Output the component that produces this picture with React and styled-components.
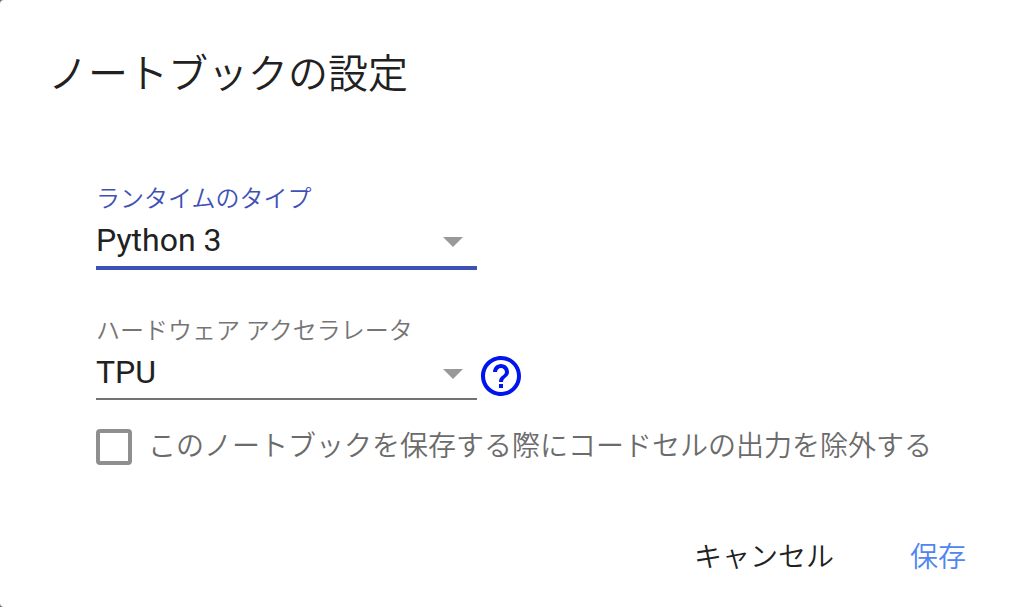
import React, {useState} from 'react';
import styled, {createGlobalStyle} from 'styled-components';

const GlobalStyle = createGlobalStyle`
*{
box-sizing:border-box;
}
body{
margin:0;
background:#6b6b6b;
font-family:Roboto, "Noto Sans CJK JP", sans-serif;
font-weight:350;
}
`;

function SelectField({id, label, value, options, onChange, active}) {
    return (
        <Field>
            <FieldLabel htmlFor={id} $active={active}>{label}</FieldLabel>
            <SelectWrapper $active={active}>
                <Select id={id} value={value} onChange={e => onChange(e.target.value)}>
                    {options.map(option => (
                        <option key={option} value={option}>{option}</option>
                    ))}
                </Select>
                <Arrow viewBox='0 0 20 10' aria-hidden='true'>
                    <path d='M0 0h20L10 10z'/>
                </Arrow>
            </SelectWrapper>
        </Field>
    );
}

export default function App() {
    const [runtime, setRuntime] = useState('Python 3');
    const [accelerator, setAccelerator] = useState('TPU');
    const [omitOutput, setOmitOutput] = useState(false);

    return (
        <>
            <GlobalStyle/>
            <Dialog role='dialog' aria-labelledby='dialog-title'>
                <Title id='dialog-title'>ノートブックの設定</Title>
                <Content>
                    <SelectField
                        id='runtime'
                        label='ランタイムのタイプ'
                        value={runtime}
                        options={['Python 2', 'Python 3']}
                        onChange={setRuntime}
                        active
                    />
                    <FieldRow>
                        <SelectField
                            id='accelerator'
                            label='ハードウェア アクセラレータ'
                            value={accelerator}
                            options={['None', 'GPU', 'TPU']}
                            onChange={setAccelerator}
                        />
                        <HelpLink href='#help' aria-label='ヘルプ'>
                            <svg viewBox='0 0 24 24' width='48' height='48' fill='currentColor'>
                                <path d='M11 18h2v-2h-2v2zm1-16C6.48 2 2 6.48 2 12s4.48 10 10 10 10-4.48 10-10S17.52 2 12 2zm0 18c-4.41 0-8-3.59-8-8s3.59-8 8-8 8 3.59 8 8-3.59 8-8 8zm0-14c-2.21 0-4 1.79-4 4h2c0-1.1.9-2 2-2s2 .9 2 2c0 2-3 1.75-3 5h2c0-2.25 3-2.5 3-5 0-2.21-1.79-4-4-4z'/>
                            </svg>
                        </HelpLink>
                    </FieldRow>
                    <CheckboxLabel>
                        <Checkbox
                            type='checkbox'
                            checked={omitOutput}
                            onChange={e => setOmitOutput(e.target.checked)}
                        />
                        このノートブックを保存する際にコードセルの出力を除外する
                    </CheckboxLabel>
                </Content>
                <Actions>
                    <ActionButton type='button'>キャンセル</ActionButton>
                    <ActionButton type='button' $primary>保存</ActionButton>
                </Actions>
            </Dialog>
        </>
    );
}

const Dialog = styled.div`
display:flex;
flex-direction:column;
min-height:100vh;
padding:48px 24px 22px 48px;
background:#fff;
border-radius:4px 0 0 4px;
color:#212121;
`;

const Title = styled.h2`
margin:0;
font-size:40px;
font-weight:inherit;
line-height:54px;
`;

const Content = styled.div`
display:flex;
flex-direction:column;
padding:82px 0 0 48px;
`;

const Field = styled.div`
width:381px;
max-width:100%;
`;

const FieldRow = styled.div`
display:flex;
align-items:flex-end;
margin-top:46px;
`;

const FieldLabel = styled.label`
display:block;
font-size:24px;
line-height:30px;
color:${props => props.$active ? '#3f51b5' : '#757575'};
`;

const SelectWrapper = styled.div`
display:flex;
align-items:center;
padding-right:14px;
border-bottom:${props => props.$active ? '4px solid #3f51b5' : '2px solid #737373'};
`;

const Select = styled.select`
appearance:none;
flex:1;
min-width:0;
height:52px;
margin:0;
padding:0;
border:none;
outline:none;
background:transparent;
color:#212121;
font-family:inherit;
font-size:32px;
font-weight:400;
cursor:pointer;
`;

const Arrow = styled.svg`
width:20px;
height:10px;
margin-top:4px;
fill:#999;
pointer-events:none;
`;

const HelpLink = styled.a`
display:flex;
color:#0015ee;
`;

const CheckboxLabel = styled.label`
display:flex;
align-items:center;
gap:16px;
margin-top:27px;
font-size:28px;
line-height:40px;
color:#6b6b6b;
`;

const Checkbox = styled.input`
appearance:none;
flex:none;
width:36px;
height:36px;
margin:0;
border:4px solid #8f8f8f;
border-radius:4px;
cursor:pointer;
&:checked{
background:#3f51b5;
border-color:#3f51b5;
}
`;

const Actions = styled.div`
display:flex;
justify-content:flex-end;
gap:8px;
margin-top:auto;
`;

const ActionButton = styled.button`
padding:0 34px;
border:none;
background:transparent;
font-family:inherit;
font-size:28px;
font-weight:inherit;
line-height:54px;
color:${props => props.$primary ? '#4f86f0' : '#212121'};
cursor:pointer;
`;
